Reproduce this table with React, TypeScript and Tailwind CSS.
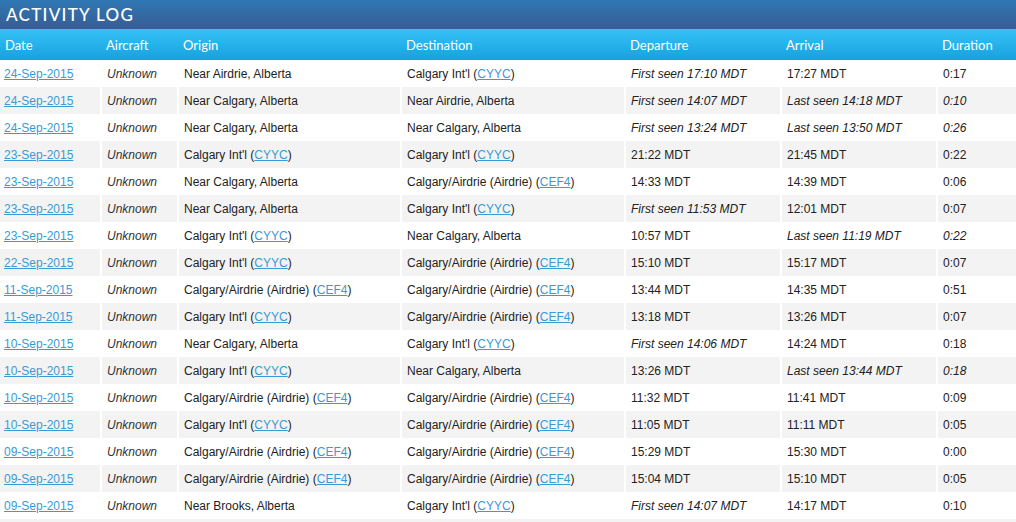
import React from "react"

type Row = {
  date: string
  origin: [string, string?]
  dest: [string, string?]
  dep: string
  depSeen?: boolean
  arr: string
  arrSeen?: boolean
  dur: string
}

const CYYC = "Calgary Int'l"
const CEF4 = "Calgary/Airdrie (Airdrie)"

const rows: Row[] = [
  { date: "24-Sep-2015", origin: ["Near Airdrie, Alberta"], dest: [CYYC, "CYYC"], dep: "First seen 17:10 MDT", depSeen: true, arr: "17:27 MDT", dur: "0:17" },
  { date: "24-Sep-2015", origin: ["Near Calgary, Alberta"], dest: ["Near Airdrie, Alberta"], dep: "First seen 14:07 MDT", depSeen: true, arr: "Last seen 14:18 MDT", arrSeen: true, dur: "0:10" },
  { date: "24-Sep-2015", origin: ["Near Calgary, Alberta"], dest: ["Near Calgary, Alberta"], dep: "First seen 13:24 MDT", depSeen: true, arr: "Last seen 13:50 MDT", arrSeen: true, dur: "0:26" },
  { date: "23-Sep-2015", origin: [CYYC, "CYYC"], dest: [CYYC, "CYYC"], dep: "21:22 MDT", arr: "21:45 MDT", dur: "0:22" },
  { date: "23-Sep-2015", origin: ["Near Calgary, Alberta"], dest: [CEF4, "CEF4"], dep: "14:33 MDT", arr: "14:39 MDT", dur: "0:06" },
  { date: "23-Sep-2015", origin: ["Near Calgary, Alberta"], dest: [CYYC, "CYYC"], dep: "First seen 11:53 MDT", depSeen: true, arr: "12:01 MDT", dur: "0:07" },
  { date: "23-Sep-2015", origin: [CYYC, "CYYC"], dest: ["Near Calgary, Alberta"], dep: "10:57 MDT", arr: "Last seen 11:19 MDT", arrSeen: true, dur: "0:22" },
  { date: "22-Sep-2015", origin: [CYYC, "CYYC"], dest: [CEF4, "CEF4"], dep: "15:10 MDT", arr: "15:17 MDT", dur: "0:07" },
  { date: "11-Sep-2015", origin: [CEF4, "CEF4"], dest: [CEF4, "CEF4"], dep: "13:44 MDT", arr: "14:35 MDT", dur: "0:51" },
  { date: "11-Sep-2015", origin: [CYYC, "CYYC"], dest: [CEF4, "CEF4"], dep: "13:18 MDT", arr: "13:26 MDT", dur: "0:07" },
  { date: "10-Sep-2015", origin: ["Near Calgary, Alberta"], dest: [CYYC, "CYYC"], dep: "First seen 14:06 MDT", depSeen: true, arr: "14:24 MDT", dur: "0:18" },
  { date: "10-Sep-2015", origin: [CYYC, "CYYC"], dest: ["Near Calgary, Alberta"], dep: "13:26 MDT", arr: "Last seen 13:44 MDT", arrSeen: true, dur: "0:18" },
  { date: "10-Sep-2015", origin: [CEF4, "CEF4"], dest: [CEF4, "CEF4"], dep: "11:32 MDT", arr: "11:41 MDT", dur: "0:09" },
  { date: "10-Sep-2015", origin: [CYYC, "CYYC"], dest: [CEF4, "CEF4"], dep: "11:05 MDT", arr: "11:11 MDT", dur: "0:05" },
  { date: "09-Sep-2015", origin: [CEF4, "CEF4"], dest: [CEF4, "CEF4"], dep: "15:29 MDT", arr: "15:30 MDT", dur: "0:00" },
  { date: "09-Sep-2015", origin: [CEF4, "CEF4"], dest: [CEF4, "CEF4"], dep: "15:04 MDT", arr: "15:10 MDT", dur: "0:05" },
  { date: "09-Sep-2015", origin: ["Near Brooks, Alberta"], dest: [CYYC, "CYYC"], dep: "First seen 14:07 MDT", depSeen: true, arr: "14:17 MDT", dur: "0:10" },
]

function Place({ p }: { p: [string, string?] }) {
  if (!p[1]) return <>{p[0]}</>
  return (
    <>
      {p[0]} (<a className="text-[#3a9ad4] underline">{p[1]}</a>)
    </>
  )
}

const cols = ["Date", "Aircraft", "Origin", "Destination", "Departure", "Arrival", "Duration"]
const widths = ["w-[101px]", "w-[77px]", "w-[223px]", "w-[224px]", "w-[156px]", "w-[156px]", "w-[79px]"]

export default function App() {
  return (
    <div className="w-[1016px] h-[522px] overflow-hidden bg-white font-['Liberation_Sans',Arial,sans-serif]">
      {/* Title */}
      <div className="h-[29px] bg-gradient-to-b from-[#2e78b3] to-[#375c94] px-[6px] flex items-center">
        <span className="text-white text-[17px] tracking-[1.3px] font-medium font-['Lato',sans-serif]">ACTIVITY LOG</span>
      </div>

      <table className="w-full table-fixed border-collapse text-[12px] text-[#222]">
        <colgroup>
          {widths.map((w, i) => (
            <col key={i} className={w} />
          ))}
        </colgroup>
        <thead>
          <tr className="h-[31px] bg-gradient-to-b from-[#34c2f6] to-[#16a1df]">
            {cols.map((c) => (
              <th key={c} className="text-left font-normal text-white text-[13px] pl-[5px] pt-[3px] font-['Lato',sans-serif]">
                {c}
              </th>
            ))}
          </tr>
        </thead>
        <tbody>
          {rows.map((r, i) => (
            <tr key={i} className={`h-[27px] ${i % 2 === 1 ? "bg-[#f3f3f3]" : "bg-white"}`}>
              <td className="pl-[4px] border-l-0 border-white">
                <a className="text-[#3a9ad4] underline">{r.date}</a>
              </td>
              <td className="pl-[5px] border-l-2 border-white italic text-[#333]">Unknown</td>
              <td className="pl-[5px] border-l-2 border-white whitespace-nowrap">
                <Place p={r.origin} />
              </td>
              <td className="pl-[5px] border-l-2 border-white whitespace-nowrap">
                <Place p={r.dest} />
              </td>
              <td className={`pl-[5px] border-l-2 border-white ${r.depSeen ? "italic" : ""}`}>{r.dep}</td>
              <td className={`pl-[5px] border-l-2 border-white ${r.arrSeen ? "italic" : ""}`}>{r.arr}</td>
              <td className={`pl-[5px] border-l-2 border-white ${r.arrSeen ? "italic" : ""}`}>{r.dur}</td>
            </tr>
          ))}
          <tr className="h-[27px] bg-[#f3f3f3]">
            <td colSpan={7}></td>
          </tr>
        </tbody>
      </table>
    </div>
  )
}
